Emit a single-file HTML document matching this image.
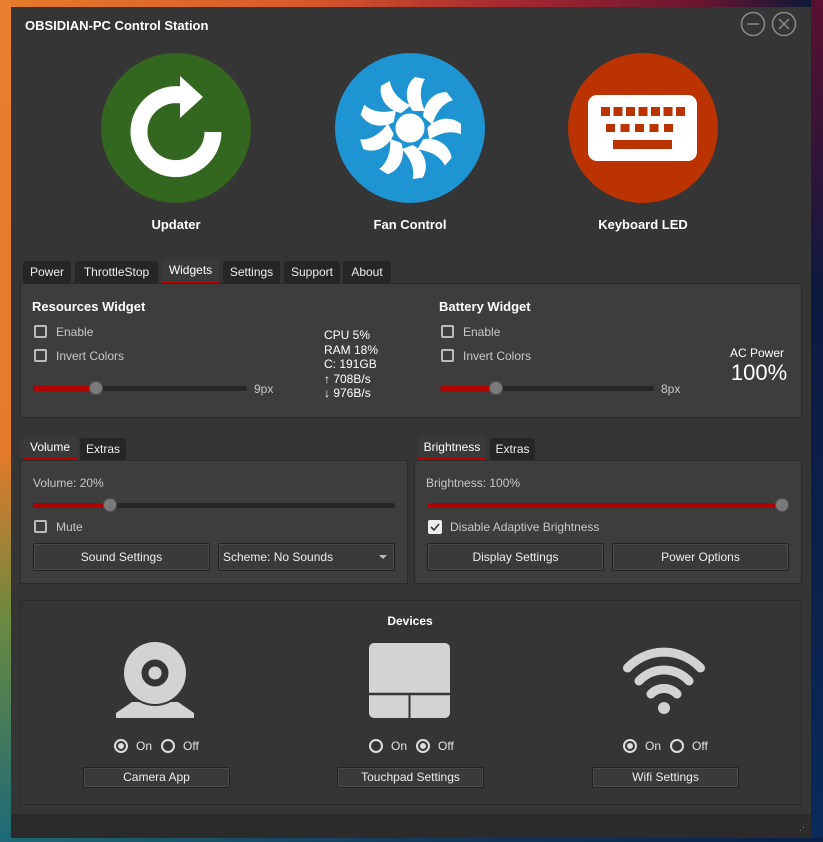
<!DOCTYPE html>
<html><head><meta charset="utf-8"><style>
*{margin:0;padding:0;box-sizing:border-box}
body{width:823px;height:842px;overflow:hidden;position:relative;font-family:"Liberation Sans",sans-serif;font-size:12px;color:#e6e6e6;
background:linear-gradient(90deg,#e67a2a 0px,#d85a2a 300px,#a82a30 500px,#6a1530 700px,#0c1838 812px);}
.abs{position:absolute}
.win{position:absolute;left:11px;top:7px;width:800px;height:831px;background:#353535}
.t{position:absolute;white-space:nowrap}
.b{font-weight:bold;color:#fff;font-size:13px}
.tab{position:absolute;height:22px;background:#262626;color:#eee;font-size:12px;text-align:center;line-height:22px;border-radius:3px 3px 0 0}
.tab.sel{background:#3a3a3a;border-bottom:2px solid #b00;color:#fff}
.panel{position:absolute;background:#3d3d3d;border:1px solid #2a2a2a}
.cb{position:absolute;width:13px;height:13px;border:2px solid #bbb;border-radius:2px}
.track{position:absolute;height:5px;background:#262626;border-radius:3px}
.fill{position:absolute;height:5px;background:#b00000;border-radius:3px}
.knob{position:absolute;width:14px;height:14px;border-radius:50%;background:#7a7a7a;border:1px solid #555}
.btn{position:absolute;background:#3a3a3a;border:1px solid #222;box-shadow:inset 0 0 0 1px #4a4a4a;border-radius:2px;color:#eee;text-align:center;font-size:12px}
.lbl{color:#c8c8c8}
.rad{position:absolute;width:14px;height:14px;border-radius:50%;border:2px solid #ddd}
.rad.on::after{content:"";position:absolute;left:2px;top:2px;width:6px;height:6px;border-radius:50%;background:#ddd}
</style></head><body>
<div class="abs" style="left:0;top:0;width:11px;height:842px;background:linear-gradient(180deg,#e88030 0,#e57a2a 450px,#6a8a40 620px,#1d6a78 842px)"></div>
<div class="abs" style="left:811px;top:0;width:12px;height:842px;background:linear-gradient(180deg,#5a1030,#0c1a40 300px,#0a2a5a 842px)"></div>
<div class="abs" style="left:0;top:838px;width:823px;height:4px;background:linear-gradient(90deg,#1d6a78,#133a5a,#0a2048)"></div>
<div class="win"></div>
<div class="t b" style="left:25px;top:18px">OBSIDIAN-PC Control Station</div>
<svg class="abs" style="left:0;top:0" width="823" height="842">
<circle cx="753" cy="24" r="11.5" fill="none" stroke="#8a8a8a" stroke-width="1.5"/><line x1="747" y1="24" x2="759" y2="24" stroke="#8a8a8a" stroke-width="1.5"/>
<circle cx="784" cy="24" r="11.5" fill="none" stroke="#8a8a8a" stroke-width="1.5"/><path d="M779 19L789 29M789 19L779 29" stroke="#8a8a8a" stroke-width="1.5"/>
<circle cx="176" cy="128" r="75" fill="#33661e"/>
<path d="M213 132A37 37 0 1 1 181 95" fill="none" stroke="#fff" stroke-width="17"/>
<polygon points="180,76 203,97 180,118" fill="#fff"/>
<circle cx="410" cy="128" r="75" fill="#1e94d3"/>
<g transform="translate(410,128)" fill="#fff">
<g id="bl"><path d="M3,-17 C-6,-28 -5,-43 5,-51 L15,-49 C9,-40 10,-28 15,-17 Z"/></g>
<use href="#bl" transform="rotate(40)"/><use href="#bl" transform="rotate(80)"/><use href="#bl" transform="rotate(120)"/><use href="#bl" transform="rotate(160)"/><use href="#bl" transform="rotate(200)"/><use href="#bl" transform="rotate(240)"/><use href="#bl" transform="rotate(280)"/><use href="#bl" transform="rotate(320)"/>
<circle r="16" stroke="#1e94d3" stroke-width="3"/>
</g>
<circle cx="643" cy="128" r="75" fill="#bb3300"/>
<rect x="588" y="95" width="109" height="66" rx="9" fill="#fff"/>
<g fill="#bb3300">
<rect x="601" y="107" width="9" height="9"/><rect x="613.5" y="107" width="9" height="9"/><rect x="626" y="107" width="9" height="9"/><rect x="638.5" y="107" width="9" height="9"/><rect x="651" y="107" width="9" height="9"/><rect x="663.5" y="107" width="9" height="9"/><rect x="676" y="107" width="9" height="9"/>
<rect x="606" y="124" width="9" height="8"/><rect x="620.5" y="124" width="9" height="8"/><rect x="635" y="124" width="9" height="8"/><rect x="649.5" y="124" width="9" height="8"/><rect x="664" y="124" width="9" height="8"/>
<rect x="613" y="140" width="59" height="9"/>
</g>
</svg>
<div class="t b" style="left:176px;top:217px;transform:translateX(-50%)">Updater</div>
<div class="t b" style="left:410px;top:217px;transform:translateX(-50%)">Fan Control</div>
<div class="t b" style="left:643px;top:217px;transform:translateX(-50%)">Keyboard LED</div>

<div class="tab" style="left:23px;top:261px;width:48px">Power</div>
<div class="tab" style="left:75px;top:261px;width:83px">ThrottleStop</div>
<div class="tab sel" style="left:162px;top:259px;width:57px;height:24px">Widgets</div>
<div class="tab" style="left:223px;top:261px;width:57px">Settings</div>
<div class="tab" style="left:284px;top:261px;width:56px">Support</div>
<div class="tab" style="left:343px;top:261px;width:48px">About</div>
<div class="panel" style="left:20px;top:283px;width:782px;height:135px"></div>
<div class="t b" style="left:32px;top:299px">Resources Widget</div>
<div class="cb" style="left:34px;top:325px"></div><div class="t lbl" style="left:56px;top:325px">Enable</div>
<div class="cb" style="left:34px;top:349px"></div><div class="t lbl" style="left:56px;top:349px">Invert Colors</div>
<div class="track" style="left:33px;top:386px;width:214px"></div><div class="fill" style="left:33px;top:386px;width:63px"></div><div class="knob" style="left:89px;top:381px"></div>
<div class="t lbl" style="left:254px;top:382px">9px</div>
<div class="t" style="left:324px;top:328px;line-height:14.5px;color:#fff">CPU 5%<br>RAM 18%<br>C: 191GB<br>↑ 708B/s<br>↓ 976B/s</div>
<div class="t b" style="left:439px;top:299px">Battery Widget</div>
<div class="cb" style="left:441px;top:325px"></div><div class="t lbl" style="left:463px;top:325px">Enable</div>
<div class="cb" style="left:441px;top:349px"></div><div class="t lbl" style="left:463px;top:349px">Invert Colors</div>
<div class="track" style="left:440px;top:386px;width:214px"></div><div class="fill" style="left:440px;top:386px;width:56px"></div><div class="knob" style="left:489px;top:381px"></div>
<div class="t lbl" style="left:661px;top:382px">8px</div>
<div class="t" style="left:757px;top:346px;transform:translateX(-50%);color:#fff">AC Power</div>
<div class="t" style="left:759px;top:360px;transform:translateX(-50%);color:#fff;font-size:22px">100%</div>

<div class="tab sel" style="left:23px;top:436px;width:54px;height:24px">Volume</div>
<div class="tab" style="left:80px;top:438px;width:46px">Extras</div>
<div class="panel" style="left:20px;top:460px;width:388px;height:124px"></div>
<div class="t lbl" style="left:33px;top:476px">Volume: 20%</div>
<div class="track" style="left:33px;top:503px;width:362px"></div><div class="fill" style="left:33px;top:503px;width:77px"></div><div class="knob" style="left:103px;top:498px"></div>
<div class="cb" style="left:34px;top:520px"></div><div class="t lbl" style="left:56px;top:520px">Mute</div>
<div class="btn" style="left:33px;top:543px;width:177px;height:28px;line-height:26px">Sound Settings</div>
<div class="btn" style="left:218px;top:543px;width:177px;height:28px;line-height:26px;text-align:left;padding-left:4px">Scheme: No Sounds<span style="position:absolute;right:7px;top:11px;border:4px solid transparent;border-top:4px solid #bbb"></span></div>

<div class="tab sel" style="left:418px;top:436px;width:68px;height:24px">Brightness</div>
<div class="tab" style="left:490px;top:438px;width:45px">Extras</div>
<div class="panel" style="left:414px;top:460px;width:388px;height:124px"></div>
<div class="t lbl" style="left:426px;top:476px">Brightness: 100%</div>
<div class="track" style="left:427px;top:503px;width:362px"></div><div class="fill" style="left:427px;top:503px;width:355px"></div><div class="knob" style="left:775px;top:498px"></div>
<div class="abs" style="left:428px;top:520px;width:14px;height:14px;background:#eee;border-radius:2px"><svg width="14" height="14"><path d="M3 7L6 10L11 4" fill="none" stroke="#333" stroke-width="1.6"/></svg></div>
<div class="t lbl" style="left:450px;top:520px">Disable Adaptive Brightness</div>
<div class="btn" style="left:427px;top:543px;width:177px;height:28px;line-height:26px">Display Settings</div>
<div class="btn" style="left:612px;top:543px;width:177px;height:28px;line-height:26px">Power Options</div>

<div class="panel" style="left:20px;top:600px;width:782px;height:205px;background:#353535;border-color:#2a2a2a"></div>
<div class="t b" style="left:410px;top:614px;transform:translateX(-50%);font-size:12px">Devices</div>
<svg class="abs" style="left:0;top:0" width="823" height="842">
<polygon points="132,702 178,702 194,713 194,718 116,718 116,713" fill="#d3d3d3"/>
<circle cx="155" cy="673" r="33" fill="#353535"/>
<circle cx="155" cy="673" r="31" fill="#d3d3d3"/>
<circle cx="155" cy="673" r="13.5" fill="#353535"/>
<circle cx="155" cy="673" r="6.5" fill="#d3d3d3"/>
<rect x="369" y="643" width="81" height="75" rx="5" fill="#d3d3d3"/>
<line x1="369" y1="694" x2="450" y2="694" stroke="#353535" stroke-width="2.5"/>
<line x1="409.5" y1="694" x2="409.5" y2="718" stroke="#353535" stroke-width="2"/>
<g fill="none" stroke="#d3d3d3" stroke-width="9" stroke-linecap="round">
<path d="M627.5 668 A50 50 0 0 1 700.5 668"/>
<path d="M639 681 A34 34 0 0 1 689 681"/>
<path d="M651 694 A18 18 0 0 1 677 694"/>
</g>
<circle cx="664" cy="708" r="6" fill="#d3d3d3"/>
</svg>
<div class="rad on" style="left:114px;top:739px"></div><div class="t" style="left:136px;top:739px">On</div>
<div class="rad" style="left:161px;top:739px"></div><div class="t" style="left:183px;top:739px">Off</div>
<div class="rad" style="left:369px;top:739px"></div><div class="t" style="left:391px;top:739px">On</div>
<div class="rad on" style="left:416px;top:739px"></div><div class="t" style="left:438px;top:739px">Off</div>
<div class="rad on" style="left:623px;top:739px"></div><div class="t" style="left:645px;top:739px">On</div>
<div class="rad" style="left:670px;top:739px"></div><div class="t" style="left:692px;top:739px">Off</div>
<div class="btn" style="left:83px;top:767px;width:147px;height:21px;line-height:19px">Camera App</div>
<div class="btn" style="left:337px;top:767px;width:147px;height:21px;line-height:19px">Touchpad Settings</div>
<div class="btn" style="left:592px;top:767px;width:147px;height:21px;line-height:19px">Wifi Settings</div>
<div class="abs" style="left:11px;top:814px;width:800px;height:24px;background:#2b2b2b"></div>
<div class="t" style="left:799px;top:822px;color:#777;font-size:9px;letter-spacing:-1px">⋰</div>
</body></html>
